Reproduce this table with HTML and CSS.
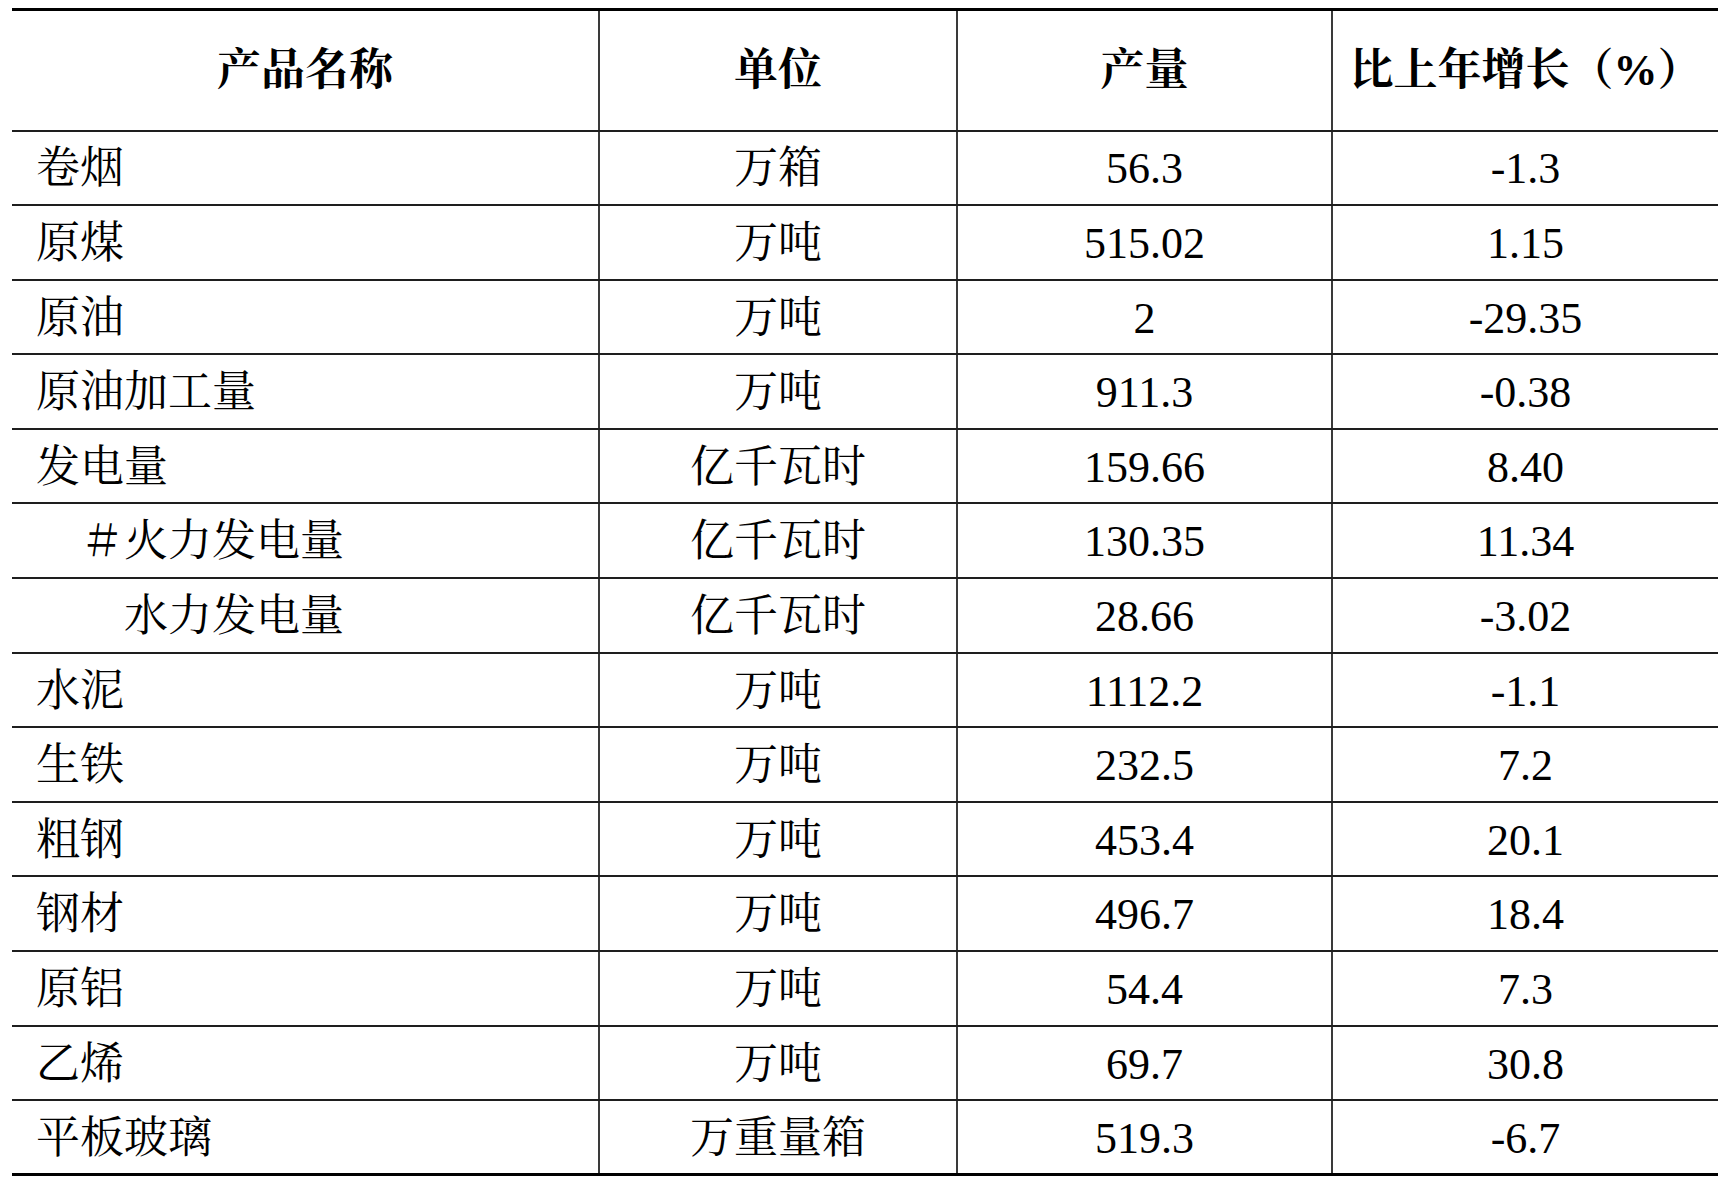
FILE: index.html
```html
<!DOCTYPE html>
<html lang="zh-CN">
<head>
<meta charset="utf-8">
<title>主要工业产品产量</title>
<link rel="stylesheet" href="styles.css">
</head>
<body>
<table class="stats">
  <colgroup>
    <col class="c-name">
    <col class="c-unit">
    <col class="c-qty">
    <col class="c-grow">
  </colgroup>
  <thead>
    <tr class="head">
      <th>产品名称</th>
      <th>单位</th>
      <th>产量</th>
      <th>比上年增长（%）</th>
    </tr>
  </thead>
  <tbody>
    <tr><td class="name">卷烟</td><td>万箱</td><td>56.3</td><td>-1.3</td></tr>
    <tr><td class="name">原煤</td><td>万吨</td><td>515.02</td><td>1.15</td></tr>
    <tr><td class="name">原油</td><td>万吨</td><td>2</td><td>-29.35</td></tr>
    <tr><td class="name">原油加工量</td><td>万吨</td><td>911.3</td><td>-0.38</td></tr>
    <tr><td class="name">发电量</td><td>亿千瓦时</td><td>159.66</td><td>8.40</td></tr>
    <tr><td class="name">　＃火力发电量</td><td>亿千瓦时</td><td>130.35</td><td>11.34</td></tr>
    <tr><td class="name">　　水力发电量</td><td>亿千瓦时</td><td>28.66</td><td>-3.02</td></tr>
    <tr><td class="name">水泥</td><td>万吨</td><td>1112.2</td><td>-1.1</td></tr>
    <tr><td class="name">生铁</td><td>万吨</td><td>232.5</td><td>7.2</td></tr>
    <tr><td class="name">粗钢</td><td>万吨</td><td>453.4</td><td>20.1</td></tr>
    <tr><td class="name">钢材</td><td>万吨</td><td>496.7</td><td>18.4</td></tr>
    <tr><td class="name">原铝</td><td>万吨</td><td>54.4</td><td>7.3</td></tr>
    <tr><td class="name">乙烯</td><td>万吨</td><td>69.7</td><td>30.8</td></tr>
    <tr><td class="name">平板玻璃</td><td>万重量箱</td><td>519.3</td><td>-6.7</td></tr>
  </tbody>
</table>
</body>
</html>
```
FILE: styles.css
```css
html, body {
  margin: 0;
  padding: 0;
  background: #ffffff;
}

.stats {
  margin: 8px 0 0 12px;
  width: 1706px;
  border-collapse: collapse;
  table-layout: fixed;
  font-family: "Liberation Serif", "Noto Serif CJK SC", "Noto Sans CJK SC", serif;
  font-size: 44px;
  line-height: 1.2;
  color: #000000;
  border-top: 3px solid #000000;
}

.c-name { width: 587px; }
.c-unit { width: 358px; }
.c-qty  { width: 375px; }
.c-grow { width: 386px; }

.stats th,
.stats td {
  padding: 0;
  text-align: center;
  vertical-align: middle;
  border-bottom: 2px solid #1e1e1e;
  border-left: 2px solid #3a3a3a;
  white-space: nowrap;
}

.stats th:first-child,
.stats td:first-child {
  border-left: none;
}

.stats th {
  font-weight: bold;
  padding-top: 2px;
}

.head {
  height: 121px;
}

.stats tbody tr {
  height: 74.6px;
}

.stats tbody tr:last-child td {
  border-bottom: 3px solid #000000;
}

.stats td {
  padding-top: 4px;
}

.stats td.name {
  text-align: left;
  padding-left: 24px;
}
```
